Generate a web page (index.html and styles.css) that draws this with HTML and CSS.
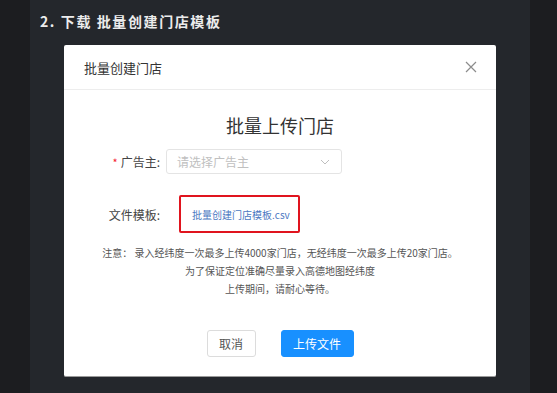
FILE: index.html
```html
<!DOCTYPE html>
<html lang="zh">
<head>
<meta charset="utf-8">
<link rel="stylesheet" href="styles.css">
</head>
<body>
<div class="page">
  <div class="strip strip-left"></div>
  <main class="main">
    <h2 class="step">2. 下载 批量创建门店模板</h2>
    <div class="modal">
      <div class="modal-header">
        <span class="modal-title">批量创建门店</span>
        <svg class="close" width="12" height="12" viewBox="0 0 12 12"><path d="M1 1L11 11M11 1L1 11" stroke="#8c8c8c" stroke-width="1.2" fill="none"/></svg>
      </div>
      <div class="modal-body">
        <div class="big-title">批量上传门店</div>
        <div class="form-row">
          <div class="label"><span class="req">*</span>广告主:</div>
          <div class="select">
            <span class="placeholder">请选择广告主</span>
            <svg width="10" height="6" viewBox="0 0 10 6"><path d="M1 1L5 5L9 1" stroke="#bfbfbf" stroke-width="1" fill="none"/></svg>
          </div>
        </div>
        <div class="form-row file-row">
          <div class="label">文件模板:</div>
          <div class="highlight"><a class="link">批量创建门店模板.csv</a></div>
        </div>
        <div class="notes">
          <p>注意：&nbsp;录入经纬度一次最多上传4000家门店，无经纬度一次最多上传20家门店。</p>
          <p>为了保证定位准确尽量录入高德地图经纬度</p>
          <p>上传期间，请耐心等待。</p>
        </div>
        <div class="actions">
          <button class="btn">取消</button>
          <button class="btn btn-primary">上传文件</button>
        </div>
      </div>
    </div>
  </main>
  <div class="strip strip-right"></div>
</div>
</body>
</html>
```
FILE: styles.css
```css
html, body {
  margin: 0;
  padding: 0;
  background: #1c1d20;
  font-family: "Noto Sans CJK SC", "Noto Sans", sans-serif;
}
.page {
  display: flex;
  width: 557px;
  height: 393px;
  overflow: hidden;
}
.strip { background: #1c1d20; }
.strip-left { width: 30px; }
.strip-right { width: 27px; }
.main {
  flex: 1;
  background: #24272c;
  padding: 11px 0 0 10px;
}
.step {
  margin: 0;
  color: #ececec;
  font-size: 14px;
  line-height: 20px;
  font-weight: bold;
  letter-spacing: 1.6px;
}
.modal {
  margin: 14px 0 0 24px;
  width: 432px;
  height: 332px;
  background: #fff;
  border-radius: 2px;
  border-bottom: 1px solid #9a9a9a;
  box-sizing: border-box;
}
.modal-header {
  height: 45px;
  border-bottom: 1px solid #ededed;
  display: flex;
  align-items: center;
  justify-content: space-between;
  padding: 0 19px 0 20px;
  box-sizing: border-box;
}
.modal-title {
  font-size: 13px;
  color: #333;
}
.modal-body {
  display: flex;
  flex-direction: column;
  padding-top: 23px;
}
.big-title {
  text-align: center;
  font-size: 18px;
  line-height: 24px;
  color: #333;
  margin-bottom: 12px;
}
.form-row {
  display: flex;
  align-items: center;
}
.label {
  width: 96px;
  text-align: right;
  font-size: 12px;
  color: #444;
  flex-shrink: 0;
}
.req {
  color: #f5222d;
  margin-right: 3px;
  font-size: 11px;
}
.select {
  margin-left: 6px;
  width: 176px;
  height: 25px;
  border: 1px solid #e4e4e4;
  border-radius: 3px;
  box-sizing: border-box;
  display: flex;
  align-items: center;
  justify-content: space-between;
  padding: 0 11px 0 10px;
}
.placeholder {
  font-size: 12px;
  color: #c0c0c0;
}
.file-row {
  margin-top: 21px;
}
.highlight {
  margin-left: 19px;
  width: 121px;
  height: 38px;
  border: 2px solid #e0141e;
  border-radius: 2px;
  box-sizing: border-box;
  display: flex;
  align-items: center;
  padding-left: 11px;
}
.link {
  font-size: 10px;
  color: #4a78c2;
  white-space: nowrap;
}
.notes {
  margin-top: 11px;
  text-align: center;
  font-size: 10px;
  line-height: 18px;
  color: #555;
}
.notes p { margin: 0; }
.actions {
  margin-top: 32px;
  display: flex;
  justify-content: center;
  gap: 25px;
}
.btn {
  height: 27px;
  width: 49px;
  border: 1px solid #dcdcdc;
  border-radius: 3px;
  background: #fff;
  color: #555;
  font-family: inherit;
  font-size: 12px;
  padding: 0;
}
.btn-primary {
  width: 73px;
  background: #1890ff;
  border-color: #1890ff;
  color: #fff;
}
```
